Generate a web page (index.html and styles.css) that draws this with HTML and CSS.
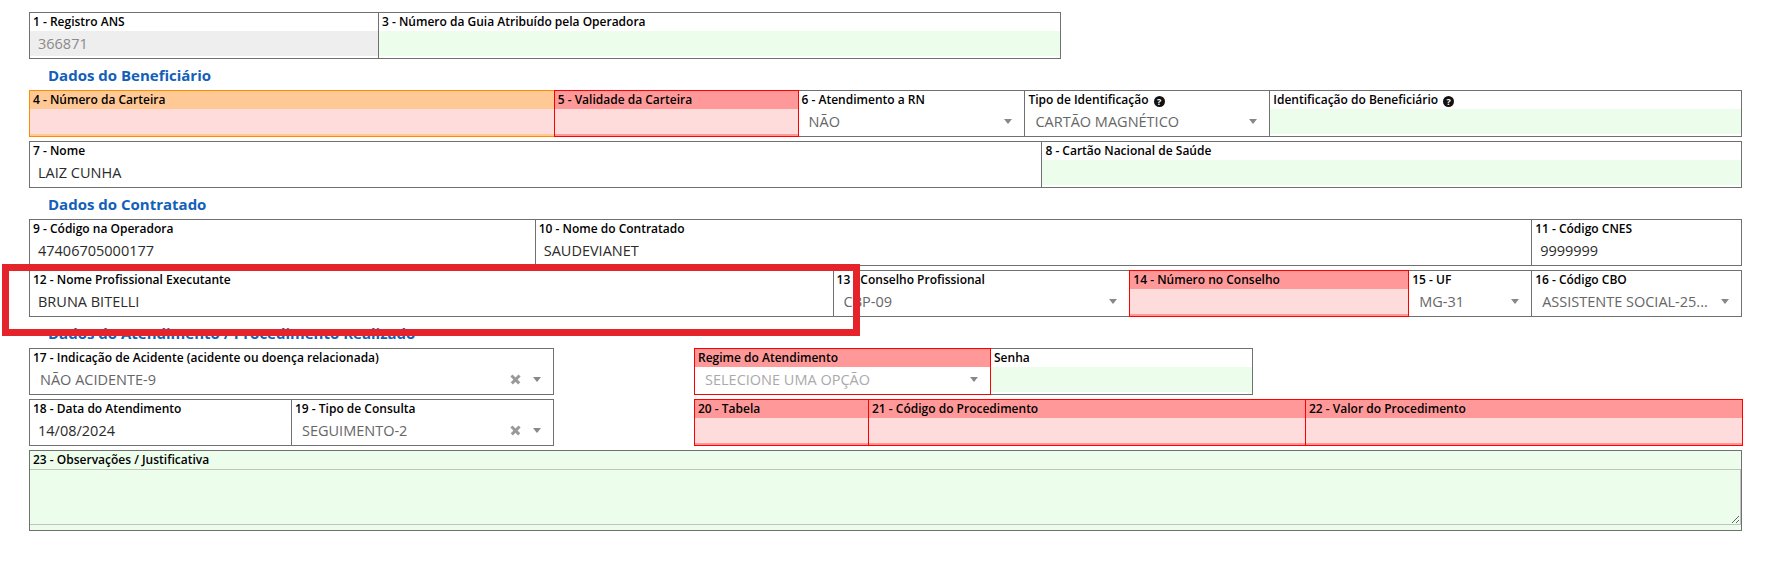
FILE: index.html
```html
<!DOCTYPE html>
<html lang="pt-BR">
<head>
    <meta charset="UTF-8">
    <title>Guia de Consulta</title>
    <link rel="stylesheet" href="styles.css">
</head>
<body>
    <div class="guia">
        <div class="linha">
            <div class="campo bloqueado c-ans">
                <label class="titulo">1 - Registro ANS</label>
                <input type="text" value="366871" readonly>
            </div>
            <div class="campo livre c-guia">
                <label class="titulo">3 - Número da Guia Atribuído pela Operadora</label>
                <input type="text">
            </div>
        </div>

        <h3 class="secao">Dados do Beneficiário</h3>
        <div class="linha">
            <div class="campo alerta c-carteira">
                <label class="titulo">4 - Número da Carteira</label>
                <input type="text">
            </div>
            <div class="campo erro c-validade">
                <label class="titulo">5 - Validade da Carteira</label>
                <input type="text">
            </div>
            <div class="campo c-rn">
                <label class="titulo">6 - Atendimento a RN</label>
                <div class="select"><span class="valor">NÃO</span><span class="seta"></span></div>
            </div>
            <div class="campo c-tipo">
                <label class="titulo">Tipo de Identificação <span class="ajuda">?</span></label>
                <div class="select"><span class="valor">CARTÃO MAGNÉTICO</span><span class="seta"></span></div>
            </div>
            <div class="campo livre c-ident">
                <label class="titulo">Identificação do Beneficiário <span class="ajuda">?</span></label>
                <input type="text">
            </div>
        </div>
        <div class="linha">
            <div class="campo c-nome">
                <label class="titulo">7 - Nome</label>
                <input type="text" value="LAIZ CUNHA">
            </div>
            <div class="campo livre c-cns">
                <label class="titulo">8 - Cartão Nacional de Saúde</label>
                <input type="text">
            </div>
        </div>

        <h3 class="secao">Dados do Contratado</h3>
        <div class="linha">
            <div class="campo c-codigo">
                <label class="titulo">9 - Código na Operadora</label>
                <input type="text" value="47406705000177">
            </div>
            <div class="campo c-contratado">
                <label class="titulo">10 - Nome do Contratado</label>
                <input type="text" value="SAUDEVIANET">
            </div>
            <div class="campo c-cnes">
                <label class="titulo">11 - Código CNES</label>
                <input type="text" value="9999999">
            </div>
        </div>
        <div class="linha">
            <div class="campo c-profissional">
                <label class="titulo">12 - Nome Profissional Executante</label>
                <input type="text" value="BRUNA BITELLI">
            </div>
            <div class="campo c-conselho">
                <label class="titulo">13 - Conselho Profissional</label>
                <div class="select"><span class="valor">CBP-09</span><span class="seta"></span></div>
            </div>
            <div class="campo erro c-numero">
                <label class="titulo">14 - Número no Conselho</label>
                <input type="text">
            </div>
            <div class="campo c-uf">
                <label class="titulo">15 - UF</label>
                <div class="select"><span class="valor">MG-31</span><span class="seta"></span></div>
            </div>
            <div class="campo c-cbo">
                <label class="titulo">16 - Código CBO</label>
                <div class="select"><span class="valor">ASSISTENTE SOCIAL-25...</span><span class="seta"></span></div>
            </div>
        </div>

        <h3 class="secao">Dados do Atendimento / Procedimento Realizado</h3>
        <div class="linha">
            <div class="grupo">
                <div class="campo c-acidente">
                    <label class="titulo">17 - Indicação de Acidente (acidente ou doença relacionada)</label>
                    <div class="select"><span class="valor">NÃO ACIDENTE-9</span><span class="limpar"></span><span class="seta"></span></div>
                </div>
            </div>
            <div class="grupo grupo-dir">
                <div class="campo erro branco c-regime">
                    <label class="titulo">Regime do Atendimento</label>
                    <div class="select"><span class="valor vazio">SELECIONE UMA OPÇÃO</span><span class="seta"></span></div>
                </div>
                <div class="campo livre c-senha">
                    <label class="titulo">Senha</label>
                    <input type="text">
                </div>
            </div>
        </div>
        <div class="linha">
            <div class="grupo">
                <div class="campo c-data">
                    <label class="titulo">18 - Data do Atendimento</label>
                    <input type="text" value="14/08/2024">
                </div>
                <div class="campo c-consulta">
                    <label class="titulo">19 - Tipo de Consulta</label>
                    <div class="select"><span class="valor">SEGUIMENTO-2</span><span class="limpar"></span><span class="seta"></span></div>
                </div>
            </div>
            <div class="grupo grupo-dir">
                <div class="campo erro c-tabela">
                    <label class="titulo">20 - Tabela</label>
                    <input type="text">
                </div>
                <div class="campo erro c-proc">
                    <label class="titulo">21 - Código do Procedimento</label>
                    <input type="text">
                </div>
                <div class="campo erro c-valor">
                    <label class="titulo">22 - Valor do Procedimento</label>
                    <input type="text">
                </div>
            </div>
        </div>
        <div class="linha">
            <div class="campo obs">
                <label class="titulo">23 - Observações / Justificativa</label>
                <textarea></textarea>
            </div>
        </div>

        <div class="destaque"></div>
    </div>
</body>
</html>
```

FILE: styles.css
```css
* {
    margin: 0;
    padding: 0;
    box-sizing: border-box;
}

body {
    font-family: "Open Sans", Arial, sans-serif;
    background: #fff;
    color: #000;
}

.guia {
    position: relative;
    width: 1768px;
    padding: 12px 26px 0 29px;
}

.linha {
    display: flex;
    margin-bottom: 4px;
}

.grupo {
    display: flex;
}

.grupo-dir {
    margin-left: 140px;
}

.campo {
    display: flex;
    flex-direction: column;
    height: 47px;
    border: 1px solid #707070;
    background: #fff;
    padding-bottom: 2px;
}

.campo + .campo {
    margin-left: -1px;
}

.titulo {
    display: block;
    height: 18px;
    line-height: 18px;
    padding-left: 3px;
    font-size: 12px;
    font-weight: 600;
    color: #000;
    white-space: nowrap;
    overflow: hidden;
}

.campo input {
    width: 100%;
    height: 25px;
    border: none;
    outline: none;
    background: transparent;
    font-family: inherit;
    font-size: 14.5px;
    color: #2b2b2b;
    padding: 0 8px;
}

.campo.livre input {
    background: #ecfdec;
}

.campo.bloqueado input {
    background: #eeeeee;
    color: #8a8a8a;
}

.campo.erro {
    position: relative;
    z-index: 1;
    border-color: #ff0000;
    background: #ff9999;
}

.campo.erro input {
    background: #ffdcdc;
}

.campo.erro.branco {
    background: #fff;
}

.campo.erro.branco .titulo {
    background: #ff9999;
}

.campo.alerta {
    position: relative;
    z-index: 1;
    border-color: #ff8c00;
    background: #ffc996;
}

.campo.alerta input {
    background: #ffdcdc;
}

.select {
    display: flex;
    align-items: center;
    height: 25px;
    padding: 0 12px 0 10px;
    font-size: 14.5px;
    color: #666;
    background: #fff;
}

.select .valor {
    flex: 1;
    white-space: nowrap;
    overflow: hidden;
}

.select .valor.vazio {
    color: #aaa;
}

.seta {
    width: 0;
    height: 0;
    border-left: 4px solid transparent;
    border-right: 4px solid transparent;
    border-top: 5px solid #888;
}

.limpar {
    position: relative;
    width: 9px;
    height: 9px;
    margin-right: 13px;
}

.limpar::before,
.limpar::after {
    content: "";
    position: absolute;
    left: -1px;
    top: 3px;
    width: 11px;
    height: 2.5px;
    background: #999;
    transform: rotate(45deg);
}

.limpar::after {
    transform: rotate(-45deg);
}

.ajuda {
    display: inline-block;
    width: 11px;
    height: 11px;
    margin-left: 2px;
    border-radius: 50%;
    background: #111;
    color: #fff;
    font-size: 9px;
    font-weight: 700;
    line-height: 11px;
    text-align: center;
    vertical-align: -1px;
}

.secao {
    height: 27px;
    padding: 3px 0 0 19px;
    font-size: 15px;
    line-height: 18px;
    font-weight: 700;
    color: #1260b8;
}

/* larguras das colunas */
.c-ans { width: 350px; }
.c-guia { width: 683px; }
.c-carteira { width: 526px; }
.c-validade { width: 245px; }
.c-rn { width: 228px; }
.c-tipo { width: 246px; }
.c-ident { width: 473px; }
.c-nome { width: 1014px; }
.c-cns { width: 701px; }
.c-codigo { width: 507px; }
.c-contratado { width: 998px; }
.c-cnes { width: 211px; }
.c-profissional { width: 805px; }
.c-conselho { width: 298px; }
.c-numero { width: 280px; }
.c-uf { width: 124px; }
.c-cbo { width: 211px; }
.c-acidente { width: 525px; }
.c-regime { width: 297px; }
.c-senha { width: 263px; }
.c-data { width: 263px; }
.c-consulta { width: 263px; }
.c-tabela { width: 175px; }
.c-proc { width: 438px; }
.c-valor { width: 438px; }

.campo.obs {
    width: 1714px;
    height: 81px;
    background: #ecfdec;
    padding-bottom: 5px;
}

.obs textarea {
    display: block;
    width: 100%;
    height: 56px;
    border: 1px solid #c2c2c2;
    border-left: none;
    background: #ecfdec;
    outline: none;
    resize: vertical;
}

.destaque {
    position: absolute;
    left: 2px;
    top: 264px;
    width: 858px;
    height: 72px;
    border: 7px solid #e4232b;
}
```
